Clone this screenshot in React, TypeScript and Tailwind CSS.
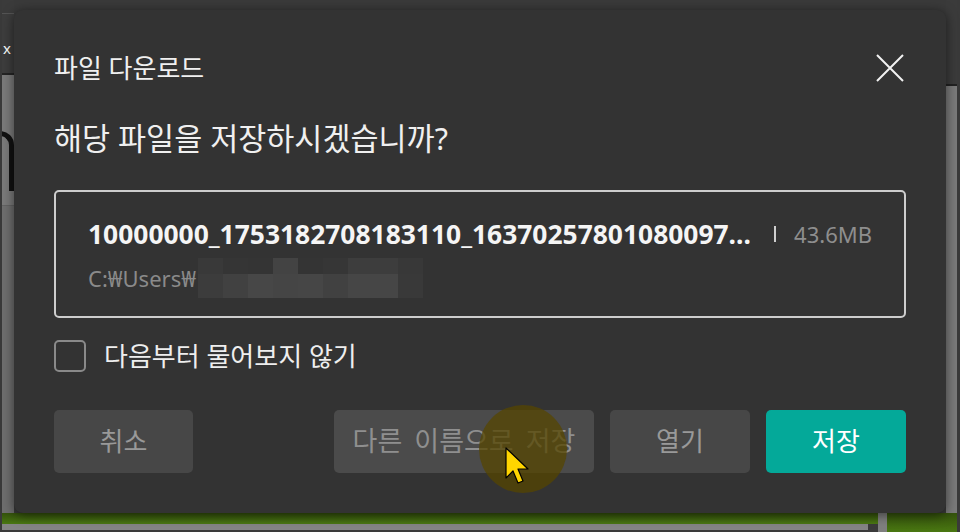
import React from "react";

const FONT = { fontFamily: '"Noto Sans", "Noto Sans CJK KR", sans-serif' };

/* mosaic that hides the user folder name */
const mosaicTop = ["#393939", "#353535", "#343434", "#434343", "#343434", "#363636", "#3d3d3d", "#3d3d3d", "#383838"];
const mosaicBottom = ["#3c3c3c", "#414141", "#474747", "#454545", "#464646", "#414141", "#464646", "#464646", "#393939"];

function CloseIcon() {
  return (
    <svg width="28" height="28" viewBox="0 0 28 28" fill="none">
      <path d="M1 1 L27 27 M27 1 L1 27" stroke="#f2f2f2" strokeWidth="2" />
    </svg>
  );
}

function Cursor() {
  return (
    <svg width="26" height="38" viewBox="0 0 26 38">
      <path
        d="M1 1 L1 31 L8 24 L13 36 L18 34 L13 22 L23 22 Z"
        fill="#ffd500"
        stroke="#000"
        strokeWidth="1.2"
        strokeLinejoin="round"
      />
    </svg>
  );
}

function Background() {
  return (
    <div className="flex flex-col w-[960px] h-[532px] bg-[#3a3a3a]">
      <div className="flex h-[513px]">
        {/* left strip of the app behind */}
        <div className="flex flex-col w-[14px] border-l-2 border-[#3a3a3a]">
          <div className="h-[14px] bg-[#3b3b3b] border-b border-[#545454]" />
          <div className="h-[59px] bg-[#3d3d3d] text-white text-[15px] leading-none pt-[27px] pl-[1px]">x</div>
          <div className="h-[2px] bg-[#242424]" />
          <div className="h-[130px] bg-[#7a7a7a] overflow-hidden pt-[56px]">
            <div className="w-[26px] h-[60px] -ml-[14px] border-t-[5px] border-r-[5px] border-[#111] rounded-tr-[14px]" />
          </div>
          <div className="h-[1px] bg-[#636363]" />
          <div className="flex-1 bg-[#6e6e6e]" />
        </div>
        <div className="flex-1" />
        {/* right strip */}
        <div className="flex w-[14px]">
          <div className="flex flex-col w-[11px]">
            <div className="h-[84px] bg-[#3b3b3b]" />
            <div className="h-[2px] bg-[#222]" />
            <div className="flex-1 bg-[#7b7b7b]" />
          </div>
          <div className="flex-1 bg-[#3a3a3a]" />
        </div>
      </div>
      <div className="flex h-[19px]">
        <div className="flex flex-col w-[878px] border-l-2 border-[#3a3a3a]">
          <div className="h-[11px] bg-gradient-to-b from-[#34520c] to-[#4a7812]" />
          <div className="flex h-[6px]">
            <div className="w-[866px] bg-[#848484]" />
            <div className="flex-1 bg-[#3a3a3a]" />
          </div>
          <div className="h-[2px] bg-[#3a3a3a]" />
        </div>
        <div className="w-[9px] bg-[#7f7f7f]" />
        <div className="w-[70px] bg-gradient-to-b from-[#34520c] to-[#4a7812]" />
        <div className="flex-1 bg-[#3a3a3a]" />
      </div>
    </div>
  );
}

function Dialog() {
  return (
    <div className="absolute left-[14px] top-[10px] w-[932px] h-[503px] rounded-[9px] bg-[#333333] shadow-[0_2px_12px_rgba(0,0,0,0.55)] flex flex-col px-10 pt-[38px] pb-10">
      <div className="flex items-center justify-between h-10">
        <div className="text-[26px] leading-10 text-[#f0f0f0]">파일 다운로드</div>
        <div className="mr-[2px]">
          <CloseIcon />
        </div>
      </div>

      <div className="mt-[30px] h-10 text-[30.5px] leading-10 text-[#f0f0f0]">해당 파일을 저장하시겠습니까?</div>

      <div className="mt-[32px] h-[128px] border-2 border-[#cdcdcd] rounded-[5px] flex flex-col pl-[32px] pr-[32px] pt-[22px]">
        <div className="flex items-center h-[40px]">
          <div className="flex-1 min-w-0 whitespace-nowrap overflow-hidden text-[26.4px] leading-[40px] font-bold text-[#f5f5f5]">
            10000000_1753182708183110_16370257801080097...
          </div>
          <div className="w-[2px] h-[16px] bg-[#cfcfcf] ml-[24px] mr-[18px]" />
          <div className="text-[22px] leading-[40px] text-[#8e8e8e]">43.6MB</div>
        </div>
        <div className="flex items-center h-[40px] mt-[4px]">
          <span className="text-[22px] leading-[40px] text-[#8a8a8a] whitespace-nowrap">C:₩Users₩</span>
          <div className="flex flex-col ml-[2px]">
            <div className="flex">
              {mosaicTop.map((c, i) => (
                <div key={i} className="w-[25px] h-[16px]" style={{ backgroundColor: c }} />
              ))}
            </div>
            <div className="flex">
              {mosaicBottom.map((c, i) => (
                <div key={i} className="w-[25px] h-[24px]" style={{ backgroundColor: c }} />
              ))}
            </div>
          </div>
        </div>
      </div>

      <div className="mt-[22px] flex items-center h-[32px]">
        <div className="w-[32px] h-[32px] rounded-[5px] border-2 border-[#8a8a8a]" />
        <div className="ml-[18px] text-[26px] leading-[32px] text-[#eeeeee]">다음부터 물어보지 않기</div>
      </div>

      <div className="mt-[38px] flex h-[63px]">
        <button className="w-[139px] h-[63px] rounded-[5px] bg-[#474747] text-[26px] text-[#999999]">취소</button>
        <div className="flex-1" />
        <div className="flex gap-4">
          <button className="w-[260px] h-[63px] rounded-[5px] bg-[#4b4b4b] text-[27px] [word-spacing:5px] text-[#8f8f8f]">다른 이름으로 저장</button>
          <button className="w-[140px] h-[63px] rounded-[5px] bg-[#474747] text-[26px] text-[#999999]">열기</button>
          <button className="w-[140px] h-[63px] rounded-[5px] bg-[#04a999] text-[26px] text-white">저장</button>
        </div>
      </div>
    </div>
  );
}

export default function App() {
  return (
    <div className="relative w-[960px] h-[532px] overflow-hidden" style={FONT}>
      <Background />
      <Dialog />
      {/* screen-recorder click highlight and pointer */}
      <div className="absolute left-[479px] top-[405px] w-[88px] h-[88px] rounded-full bg-[rgba(85,70,0,0.75)]" />
      <div className="absolute left-[505px] top-[447px]">
        <Cursor />
      </div>
    </div>
  );
}
